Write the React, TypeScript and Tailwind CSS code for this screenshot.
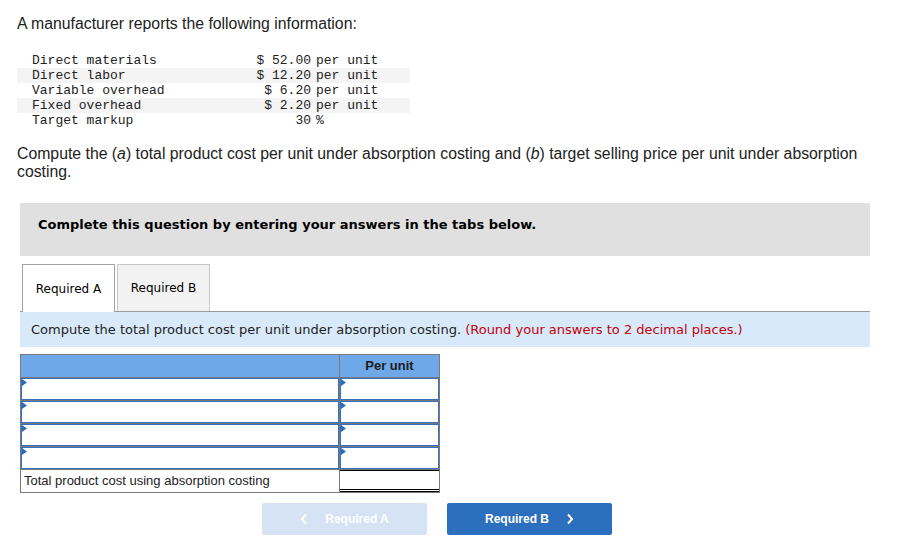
import React from "react";

const info = [
  { label: "Direct materials", value: "$ 52.00", unit: "per unit" },
  { label: "Direct labor", value: "$ 12.20", unit: "per unit" },
  { label: "Variable overhead", value: "$ 6.20", unit: "per unit" },
  { label: "Fixed overhead", value: "$ 2.20", unit: "per unit" },
  { label: "Target markup", value: "30", unit: "%" },
];

const sans = "font-['Liberation_Sans',Arial,sans-serif]";
const verdana = "font-['DejaVu_Sans',Verdana,sans-serif]";

// little dropdown marker in the corner of each input cell
const Marker = () => (
  <svg className="absolute left-0 top-0" width="5" height="7" viewBox="0 0 5 7">
    <path d="M0 0 L5 3.5 L0 7 Z" fill="#2c6cb9" />
  </svg>
);

const InputCell = ({ divider }: { divider?: boolean }) => (
  <div className={`h-[22px] ${divider ? "border-r border-[#7a7a7a]" : ""}`}>
    <div className="relative h-full border border-[#3471c0]">
      <Marker />
    </div>
  </div>
);

export default function App() {
  return (
    <div className={`min-h-[551px] bg-white pt-[15px] pl-[17px] text-[#222] ${sans}`}>
      <div className="w-[853px]">
        <p className="text-[15.8px] leading-[18px]">A manufacturer reports the following information:</p>

        {/* given data */}
        <div className="mt-[20px] w-[393px] font-['Liberation_Mono','Courier_New',monospace] text-[13px] leading-[15px] text-[#222]">
          {info.map((row, i) => (
            <div key={row.label} className={`grid grid-cols-[238px_56px_99px] ${i % 2 === 1 ? "bg-[#f4f4f4]" : ""}`}>
              <span className="pl-[15px] whitespace-pre">{row.label}</span>
              <span className="text-right whitespace-pre">{row.value}</span>
              <span className="pl-[5px] whitespace-pre">{row.unit}</span>
            </div>
          ))}
        </div>

        <p className="mt-[17px] text-[15.8px] leading-[18px]">
          Compute the (<i>a</i>) total product cost per unit under absorption costing and (<i>b</i>) target selling price per unit under absorption costing.
        </p>

        <div className="ml-[3px] mt-[22px] h-[53px] w-[850px] bg-[#e0e0e0] pl-[18px] pt-[14px]">
          <p className={`${verdana} text-[13px] leading-[16px] font-bold text-black`}>
            Complete this question by entering your answers in the tabs below.
          </p>
        </div>

        {/* tabs */}
        <div className={`ml-[3px] mt-[8px] flex w-[850px] items-end gap-[2px] border-b border-[#999] pl-[2px] ${verdana} text-[12px] text-black`}>
          <div className="-mb-px flex h-[48px] w-[93px] items-center justify-center border border-b-0 border-[#a3a3a3] bg-white">
            Required A
          </div>
          <div className="flex h-[47px] w-[93px] items-center justify-center border border-b-0 border-[#c8c8c8] bg-[#f2f2f2]">
            Required B
          </div>
        </div>

        <div className={`ml-[3px] flex h-[35px] w-[850px] items-center bg-[#d8eaf9] pl-[11px] ${verdana} text-[13px] text-[#222]`}>
          Compute the total product cost per unit under absorption costing.&nbsp;
          <span className="text-[#c5000c]">(Round your answers to 2 decimal places.)</span>
        </div>

        {/* answer table */}
        <div className="ml-[3px] mt-[7px] w-[420px] border border-[#7a7a7a]">
          <div className="grid h-[23px] grid-cols-[319px_99px] border-b border-[#7a7a7a] bg-[#6fa8e8]">
            <div className="border-r border-[#7a7a7a]" />
            <div className="flex items-center justify-center text-[13px] font-bold text-[#1c1c1c]">Per unit</div>
          </div>
          {[0, 1, 2, 3].map((r) => (
            <div key={r} className="grid grid-cols-[319px_99px] border-b border-[#7a7a7a]">
              <InputCell divider />
              <InputCell />
            </div>
          ))}
          <div className="grid h-[22px] grid-cols-[319px_99px]">
            <div className="flex items-center border-r border-[#7a7a7a] pl-[3px] text-[13px] text-[#222]">
              Total product cost using absorption costing
            </div>
            <div className="border-t border-black border-b-[3px] border-b-black [border-bottom-style:double]" />
          </div>
        </div>

        {/* nav buttons */}
        <div className="ml-[245px] mt-[10px] flex gap-[20px] text-[12px] font-bold text-white">
          <div className="flex h-[32px] w-[165px] items-center justify-center gap-[17px] rounded-[2px] bg-[#d6e3f4]">
            <svg width="8" height="12" viewBox="0 0 8 12">
              <path d="M6 1.5 L2 6 L6 10.5" fill="none" stroke="white" strokeWidth="2" />
            </svg>
            <span>Required A</span>
          </div>
          <div className="flex h-[32px] w-[165px] items-center justify-center gap-[17px] rounded-[2px] bg-[#2d6fbf]">
            <span>Required B</span>
            <svg width="8" height="12" viewBox="0 0 8 12">
              <path d="M2 1.5 L6 6 L2 10.5" fill="none" stroke="white" strokeWidth="2" />
            </svg>
          </div>
        </div>
      </div>
    </div>
  );
}
